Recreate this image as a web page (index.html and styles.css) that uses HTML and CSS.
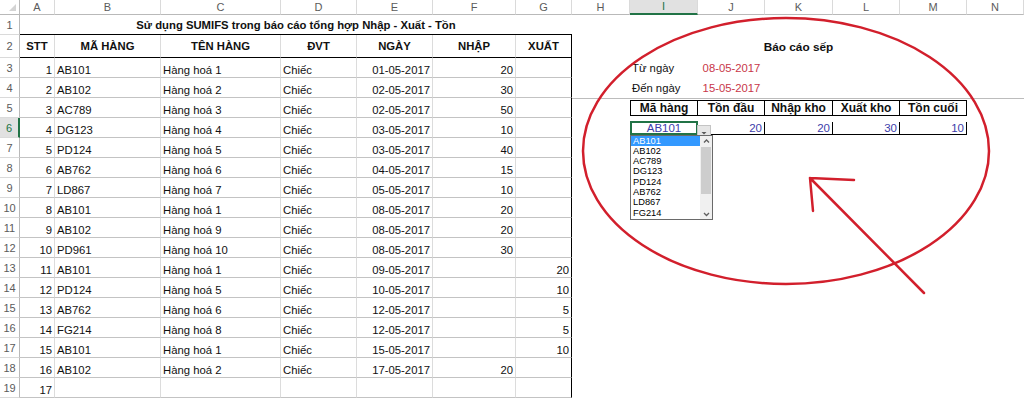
FILE: index.html
```html
<!DOCTYPE html>
<html lang="vi">
<head>
<meta charset="utf-8">
<title>SUMIFS - Nhập Xuất Tồn</title>
<link rel="stylesheet" href="styles.css">
</head>
<body>
<div class="sheet">
  <div class="colheads">
    <div class="corner"><span class="tri"></span></div>
    <div>A</div><div>B</div><div>C</div><div>D</div><div>E</div><div>F</div><div>G</div>
    <div>H</div><div class="on">I</div><div>J</div><div>K</div><div>L</div><div>M</div><div>N</div>
  </div>
  <div class="body">
    <div class="rownums">
      <div>1</div><div>2</div><div>3</div><div>4</div><div>5</div><div class="on">6</div>
      <div>7</div><div>8</div><div>9</div><div>10</div><div>11</div><div>12</div><div>13</div>
      <div>14</div><div>15</div><div>16</div><div>17</div><div>18</div><div>19</div>
    </div>
    <div class="ledger">
      <div class="title">Sử dụng SUMIFS trong báo cáo tổng hợp Nhập - Xuất - Tồn</div>
      <div class="hd">STT</div><div class="hd">MÃ HÀNG</div><div class="hd">TÊN HÀNG</div><div class="hd">ĐVT</div><div class="hd">NGÀY</div><div class="hd">NHẬP</div><div class="hd">XUẤT</div>
      <div>1</div><div>AB101</div><div>Hàng hoá 1</div><div>Chiếc</div><div>01-05-2017</div><div>20</div><div></div>
      <div>2</div><div>AB102</div><div>Hàng hoá 2</div><div>Chiếc</div><div>02-05-2017</div><div>30</div><div></div>
      <div>3</div><div>AC789</div><div>Hàng hoá 3</div><div>Chiếc</div><div>02-05-2017</div><div>50</div><div></div>
      <div>4</div><div>DG123</div><div>Hàng hoá 4</div><div>Chiếc</div><div>03-05-2017</div><div>10</div><div></div>
      <div>5</div><div>PD124</div><div>Hàng hoá 5</div><div>Chiếc</div><div>03-05-2017</div><div>40</div><div></div>
      <div>6</div><div>AB762</div><div>Hàng hoá 6</div><div>Chiếc</div><div>04-05-2017</div><div>15</div><div></div>
      <div>7</div><div>LD867</div><div>Hàng hoá 7</div><div>Chiếc</div><div>05-05-2017</div><div>10</div><div></div>
      <div>8</div><div>AB101</div><div>Hàng hoá 1</div><div>Chiếc</div><div>08-05-2017</div><div>20</div><div></div>
      <div>9</div><div>AB102</div><div>Hàng hoá 9</div><div>Chiếc</div><div>08-05-2017</div><div>20</div><div></div>
      <div>10</div><div>PD961</div><div>Hàng hoá 10</div><div>Chiếc</div><div>08-05-2017</div><div>30</div><div></div>
      <div>11</div><div>AB101</div><div>Hàng hoá 1</div><div>Chiếc</div><div>09-05-2017</div><div></div><div>20</div>
      <div>12</div><div>PD124</div><div>Hàng hoá 5</div><div>Chiếc</div><div>10-05-2017</div><div></div><div>10</div>
      <div>13</div><div>AB762</div><div>Hàng hoá 6</div><div>Chiếc</div><div>12-05-2017</div><div></div><div>5</div>
      <div>14</div><div>FG214</div><div>Hàng hoá 8</div><div>Chiếc</div><div>12-05-2017</div><div></div><div>5</div>
      <div>15</div><div>AB101</div><div>Hàng hoá 1</div><div>Chiếc</div><div>15-05-2017</div><div></div><div>10</div>
      <div>16</div><div>AB102</div><div>Hàng hoá 2</div><div>Chiếc</div><div>17-05-2017</div><div>20</div><div></div>
      <div>17</div><div></div><div></div><div></div><div></div><div></div><div></div>
    </div>
    <div class="report">
      <div class="rtitle">Báo cáo sếp</div>
      <div class="from-l">Từ ngày</div>
      <div class="from-v date">08-05-2017</div>
      <div class="to-l">Đến ngày</div>
      <div class="to-v date">15-05-2017</div>
      <div class="rule"></div>
      <div class="stock">
        <div class="th">Mã hàng</div>
        <div class="th">Tồn đầu</div>
        <div class="th">Nhập kho</div>
        <div class="th">Xuất kho</div>
        <div class="th">Tồn cuối</div>
        <div class="pick">AB101
          <span class="dd"><svg width="12" height="13" viewBox="0 0 12 13"><polygon points="3.5,6 8.5,6 6,8.5" fill="#5a5a5a"/></svg></span>
          <div class="menu">
            <ul class="opts">
              <li class="cur">AB101</li>
              <li>AB102</li>
              <li>AC789</li>
              <li>DG123</li>
              <li>PD124</li>
              <li>AB762</li>
              <li>LD867</li>
              <li>FG214</li>
            </ul>
            <div class="sb">
              <svg width="11" height="10" viewBox="0 0 11 10"><polyline points="3,6.5 5.5,4 8,6.5" fill="none" stroke="#5f5f5f" stroke-width="1.3"/></svg>
              <div class="thumb"></div>
              <div class="gap"></div>
              <svg width="11" height="10" viewBox="0 0 11 10"><polyline points="3,4 5.5,6.5 8,4" fill="none" stroke="#5f5f5f" stroke-width="1.3"/></svg>
            </div>
          </div>
        </div>
        <div class="val">20</div>
        <div class="val">20</div>
        <div class="val">30</div>
        <div class="val">10</div>
      </div>
    </div>
  </div>
  <svg class="ink" width="1024" height="399" viewBox="0 0 1024 399">
    <ellipse cx="786" cy="151" rx="203" ry="133" fill="none" stroke="#d21f2c" stroke-width="2.5"/>
    <path d="M924 293 L810 178 M810 178 L854 180 M810 178 L813 211" fill="none" stroke="#d21f2c" stroke-width="2.5" stroke-linecap="round"/>
  </svg>
</div>
</body>
</html>
```

FILE: styles.css
```css
* { box-sizing: border-box; margin: 0; padding: 0; }
html, body { width: 1024px; height: 399px; overflow: hidden; background: #fff; }
body { font-family: "Liberation Sans", Arial, sans-serif; font-size: 11.3px; color: #111; }

.sheet { position: relative; width: 1024px; height: 399px; }

/* column letters */
.colheads {
  display: grid;
  grid-template-columns: 20px 35px 106px 120px 76px 76px 83px 56px 58px 68px 67px 68px 67px 67px 57px;
  height: 15px;
}
.colheads > div {
  display: flex; align-items: center; justify-content: center;
  border-right: 1px solid #dadada; border-bottom: 1px solid #b9b9b9;
  color: #5b5b5b; line-height: 1; background: #fff; font-size: 11px;
}
.colheads > .corner { justify-content: flex-end; align-items: flex-end; padding: 0 3px 3px 0; border-right-color: #b9b9b9; }
.tri { width: 0; height: 0; border-left: 7px solid transparent; border-bottom: 7px solid #d4d4d4; }
.colheads > .on { background: #e1e1e1; color: #217346; border-bottom: 2px solid #217346; }

.body { display: grid; grid-template-columns: 20px 552px 452px; }

/* row numbers */
.rownums { display: grid; grid-template-rows: 20px 23px repeat(17, 20px); }
.rownums > div {
  display: flex; align-items: center; justify-content: center;
  border-right: 1px solid #b9b9b9; border-bottom: 1px solid #dadada;
  color: #5b5b5b; font-size: 11px;
}
.rownums > .on { background: #e1e1e1; color: #217346; border-right: 2px solid #217346; }

/* left ledger */
.ledger {
  display: grid;
  grid-template-columns: 35px 106px 120px 76px 76px 83px 56px;
  grid-template-rows: 20px 23px repeat(17, 20px);
}
.ledger > div {
  display: flex; align-items: flex-end;
  padding: 0 2px 1px;
  border-right: 1px solid #dcdcdc; border-bottom: 1px solid #c3c3c3;
  white-space: nowrap; overflow: hidden;
}
.ledger > div:nth-child(7n+2),
.ledger > div:nth-child(7n+6),
.ledger > div:nth-child(7n+7),
.ledger > div:nth-child(7n+8) { justify-content: flex-end; }
.ledger > div:nth-child(7n+8) { border-right-color: #000; }
.ledger > div.title {
  grid-column: 1 / -1;
  justify-content: center; align-items: center;
  font-weight: bold; padding: 0;
  border-right: none; border-bottom: 1px solid #000;
}
.ledger > div.hd {
  justify-content: center; align-items: center;
  font-weight: bold; padding: 0;
  border-bottom: 1px solid #000;
}

/* right report */
.report {
  position: relative;
  display: grid;
  grid-template-columns: 58px 68px 67px 68px 67px 67px 57px;
  grid-template-rows: 20px 23px 20px 20px 20px 20px;
  align-content: start;
}
.report > div { display: flex; align-items: center; padding: 0 2px; white-space: nowrap; }
.rtitle { grid-area: 2 / 2 / 3 / 7; justify-content: center; font-weight: bold; font-size: 11.8px; }
.from-l { grid-area: 3 / 2; }
.from-v { grid-area: 3 / 3; }
.to-l { grid-area: 4 / 2; }
.to-v { grid-area: 4 / 3; }
.date { color: #c8374a; justify-content: center; }
.report > .rule { grid-area: 5 / 1 / 6 / -1; border-top: 1px solid #bcbcbc; }

.report > .stock {
  grid-area: 5 / 2 / 7 / 7;
  display: grid;
  grid-template-columns: 68px 67px 68px 67px 67px;
  grid-template-rows: 20px 20px;
  padding: 0;
}
.stock > div {
  display: flex; align-items: center;
  padding: 0 2px;
  border-right: 1px solid #000; border-bottom: 1px solid #000;
  white-space: nowrap;
}
.stock > div:nth-child(5n+1) { border-left: 1px solid #000; }
.stock > .th { border-top: 1px solid #000; justify-content: center; font-weight: bold; font-size: 12px; }
.stock > .val { justify-content: flex-end; color: #3c3caa; font-size: 11.5px; }
.stock > .pick { position: relative; justify-content: center; color: #3c3caa; font-size: 11.5px; }
.pick::after {
  content: ""; position: absolute;
  left: -1px; top: -1px; right: -1px; bottom: -1px;
  border: 2px solid #217346;
  z-index: 2;
}

.dd {
  position: absolute; left: 100%; top: 3px;
  width: 14px; height: 15px;
  background: #e6e6e6; border: 1px solid #c4c4c4;
  display: flex; align-items: center; justify-content: center;
  z-index: 3;
}

.menu {
  position: absolute; left: -1px; top: calc(100% + 1px);
  width: 83px; height: 85px;
  background: #fff; border: 1px solid #6a6a6a;
  display: flex;
  z-index: 4;
  font-size: 9.3px; color: #000;
}
.opts { list-style: none; flex: 1; }
.opts li { height: 10.3px; line-height: 10.3px; padding-left: 2px; }
.opts .cur { background: #3399ff; color: #fff; }
.sb {
  width: 12px; background: #f0f0f0;
  display: flex; flex-direction: column; align-items: center;
}
.thumb { width: 10px; height: 47px; margin-top: 1px; background: #cdcdcd; }
.gap { flex: 1; }

.ink { position: absolute; left: 0; top: 0; pointer-events: none; z-index: 5; }
```
